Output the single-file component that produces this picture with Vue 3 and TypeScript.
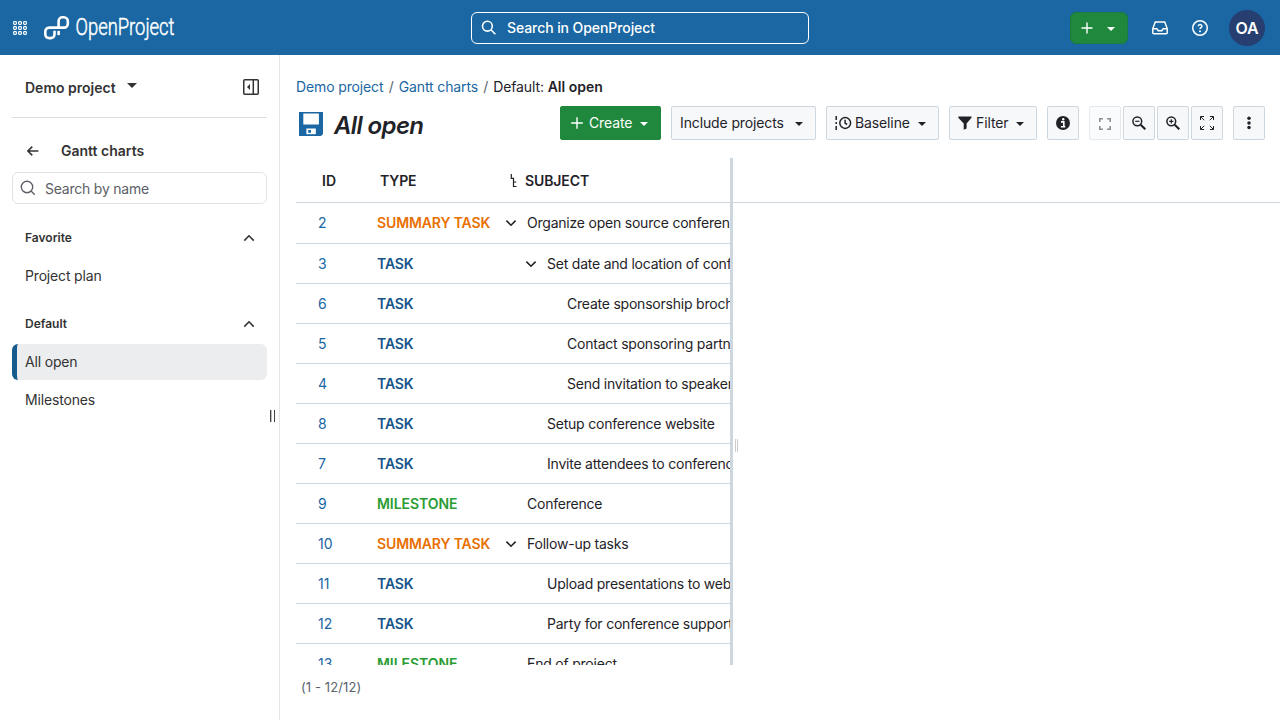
<script setup lang="ts">
interface WorkPackage {
  id: number
  type: 'Summary task' | 'Task' | 'Milestone'
  subject: string
  level: number
  open?: boolean
}

const rows: WorkPackage[] = [
  { id: 2, type: 'Summary task', subject: 'Organize open source conference', level: 0, open: true },
  { id: 3, type: 'Task', subject: 'Set date and location of conference', level: 1, open: true },
  { id: 6, type: 'Task', subject: 'Create sponsorship brochure and hand-outs', level: 2 },
  { id: 5, type: 'Task', subject: 'Contact sponsoring partners', level: 2 },
  { id: 4, type: 'Task', subject: 'Send invitation to speakers', level: 2 },
  { id: 8, type: 'Task', subject: 'Setup conference website', level: 1 },
  { id: 7, type: 'Task', subject: 'Invite attendees to conference', level: 1 },
  { id: 9, type: 'Milestone', subject: 'Conference', level: 0 },
  { id: 10, type: 'Summary task', subject: 'Follow-up tasks', level: 0, open: true },
  { id: 11, type: 'Task', subject: 'Upload presentations to website', level: 1 },
  { id: 12, type: 'Task', subject: 'Party for conference supporters :-)', level: 1 },
  { id: 13, type: 'Milestone', subject: 'End of project', level: 0 },
]

const typeClass = (t: WorkPackage['type']): string => 'type-' + t.split(' ')[0].toLowerCase()

const groups = [
  { name: 'Favorite', items: ['Project plan'] },
  { name: 'Default', items: ['All open', 'Milestones'] },
]
const active = 'All open'

const gridDots = [0, 1, 2].flatMap((r) => [0, 1, 2].map((c) => ({ x: 1 + c * 5, y: 1 + r * 5 })))
</script>

<template>
  <div class="app">
    <header class="topbar">
      <div class="brand">
        <svg class="grid-icon" width="14" height="14" viewBox="0 0 14 14">
          <rect v-for="(d, i) in gridDots" :key="i" :x="d.x - 0.4" :y="d.y - 0.4" width="2.8" height="2.8" rx=".8" />
        </svg>
        <svg class="logo" width="132" height="28" viewBox="0 0 132 28">
          <path d="M14.6 13.6V7a3.8 3.8 0 0 1 3.8-3.8h1.5a3.9 3.9 0 0 1 3.9 3.9v2.6a3.9 3.9 0 0 1-3.9 3.9H5.2a3.9 3.9 0 0 0-3.9 3.9v2.8a3.8 3.8 0 0 0 3.8 3.8h1.6a3.8 3.8 0 0 0 3.8-3.8v-3.6" class="mark" />
          <path d="M14.6 16.9v4.2" class="mark" />
          <text x="31.5" y="21" textLength="99" lengthAdjust="spacingAndGlyphs">OpenProject</text>
        </svg>
      </div>
      <div class="global-search">
        <svg width="16" height="16" viewBox="0 0 16 16"><circle cx="6.4" cy="6.2" r="4.9" /><path d="M9.9 9.7 14.4 14.2" /></svg>
        <span>Search in OpenProject</span>
      </div>
      <div class="top-actions">
        <div class="quick-add">
          <svg width="12" height="12" viewBox="0 0 12 12"><path d="M6 .5v11M.5 6h11" /></svg>
          <i class="caret" />
        </div>
        <svg class="inbox" width="16" height="16" viewBox="0 0 16 16">
          <path d="M3.3 2h9.4l2.5 6.6v4.2a1 1 0 0 1-1 1H1.8a1 1 0 0 1-1-1V8.6zM1 8.8h3.8l1.4 2h3.6l1.4-2H15" />
        </svg>
        <svg class="help" width="16" height="16" viewBox="0 0 16 16">
          <circle cx="8" cy="8" r="7.25" />
          <path d="M6.2 6.3c.1-2.3 3.7-2.3 3.7-.1 0 1.4-1.9 1.4-1.9 2.8" /><circle class="dot" cx="8" cy="11.3" r="1" />
        </svg>
        <div class="avatar">OA</div>
      </div>
    </header>

    <div class="body">
      <aside class="sidebar">
        <div class="project">
          <strong>Demo project</strong>
          <i class="caret big" />
          <svg class="collapse" width="16" height="16" viewBox="0 0 16 16">
            <rect x=".75" y=".75" width="14.5" height="14.5" rx="1" /><path d="M10.3 1v14" /><path class="solid" d="M7 5v6L4 8z" />
          </svg>
        </div>
        <div class="back">
          <svg width="12" height="12" viewBox="0 0 12 12"><path d="M5.3 1.6.9 6l4.4 4.4M1 6h10.4" /></svg>
          <strong>Gantt charts</strong>
        </div>
        <div class="side-search">
          <svg width="16" height="16" viewBox="0 0 16 16"><circle cx="7" cy="7" r="5.7" /><path d="M11.1 11.1l3.6 3.6" /></svg>
          <span>Search by name</span>
        </div>
        <section v-for="g in groups" :key="g.name" class="group">
          <div class="group-head">
            <span>{{ g.name }}</span>
            <svg width="12" height="12" viewBox="0 0 12 12"><path d="M1.3 8.6 6 3.8l4.7 4.8" /></svg>
          </div>
          <div v-for="it in g.items" :key="it" class="item" :class="{ active: it === active }">{{ it }}</div>
        </section>
        <div class="resizer" />
      </aside>

      <main class="main">
        <nav class="crumbs">
          <a>Demo project</a><span class="sep">/</span><a>Gantt charts</a><span class="sep">/</span><span>Default: <b>All open</b></span>
        </nav>
        <div class="toolbar">
          <svg class="save" width="24" height="24" viewBox="0 0 24 24">
            <path d="M0 0h24v22l-2 2H0z" /><rect class="w" x="4.3" y="1.5" width="15.6" height="11" /><rect class="w" x="7.4" y="16.5" width="9.4" height="5.7" /><rect x="9.2" y="18" width="2.8" height="2.8" />
          </svg>
          <h1>All open</h1>
          <div class="buttons">
            <div class="btn create">
              <svg width="12" height="12" viewBox="0 0 12 12"><path d="M6 .2v11.6M.2 6h11.6" /></svg>
              <span>Create</span><i class="caret" />
            </div>
            <div class="btn include"><span>Include projects</span><i class="caret" /></div>
            <div class="btn baseline">
              <svg width="17" height="16" viewBox="0 0 17 16">
                <path d="M1.2 1v4M1.2 7v2M1.2 11v4" /><circle cx="10.2" cy="8" r="5.4" /><path d="M10.1 4.8V8.2l2 1.3" />
              </svg>
              <span>Baseline</span><i class="caret" />
            </div>
            <div class="btn filter">
              <svg width="14" height="14" viewBox="0 0 14 14"><path d="M.3.5h13.2v1.2L8.6 7.4v5.2l-2.9 1.2V7.4L.3 1.7z" /></svg>
              <span>Filter</span><i class="caret" />
            </div>
            <div class="btn sq info">
              <svg width="14" height="14" viewBox="0 0 14 14"><circle cx="7" cy="7" r="7" /><path d="M5 5.9h2.8v4.7M4.9 10.8h4.4" /><circle class="w" cx="7.2" cy="3.3" r="1.2" /></svg>
            </div>
            <div class="btn sq dim">
              <svg width="12" height="12" viewBox="0 0 12 12"><path d="M.8 4V.8H4M8 .8h3.2V4M11.2 8v3.2H8M4 11.2H.8V8" /></svg>
            </div>
            <div class="btn sq tight zoom">
              <svg width="14" height="14" viewBox="0 0 14 14"><circle cx="5.3" cy="5.3" r="4.4" /><path class="h" d="m8.7 8.7 4.6 4.6" /><path class="s" d="M3.2 5.3h4.2" /></svg>
            </div>
            <div class="btn sq tight zoom">
              <svg width="14" height="14" viewBox="0 0 14 14"><circle cx="5.3" cy="5.3" r="4.4" /><path class="h" d="m8.7 8.7 4.6 4.6" /><path class="s" d="M3.2 5.3h4.2M5.3 3.2v4.2" /></svg>
            </div>
            <div class="btn sq tight full">
              <svg width="14" height="14" viewBox="0 0 14 14"><path d="M.5 4V.5H4M.8.8l3.4 3.4M10 .5h3.5V4M13.2.8 9.8 4.2M13.5 10v3.5H10M13.2 13.2 9.8 9.8M4 13.5H.5V10M.8 13.2l3.4-3.4" /></svg>
            </div>
            <div class="btn sq more">
              <svg width="4" height="14" viewBox="0 0 4 14"><circle cx="2" cy="2.2" r="1.75" /><circle cx="2" cy="6.9" r="1.75" /><circle cx="2" cy="11.6" r="1.75" /></svg>
            </div>
          </div>
        </div>

        <div class="split">
          <div class="table">
            <div class="row head">
              <div class="c-id">ID</div>
              <div class="c-type">TYPE</div>
              <div class="c-subject">
                <svg width="8" height="14" viewBox="0 0 8 14"><path d="M1.3 0v4.3h2.2v8.2h3M3.5 8h2.8" /></svg>
                SUBJECT
              </div>
            </div>
            <div v-for="r in rows" :key="r.id" class="row">
              <div class="c-id">{{ r.id }}</div>
              <div class="c-type" :class="typeClass(r.type)">{{ r.type }}</div>
              <div class="c-subject" :class="'level-' + r.level">
                <span class="toggle"><svg v-if="r.open" width="12" height="12" viewBox="0 0 12 12"><path d="M1.4 3.6 6 8.2l4.6-4.6" /></svg></span>
                <span class="subject">{{ r.subject }}</span>
              </div>
            </div>
          </div>
          <div class="timeline">
            <div class="timeline-head" />
            <div class="handle" />
          </div>
        </div>
        <footer class="pagination">(1 - 12/12)</footer>
      </main>
    </div>
  </div>
</template>

<style>
body {
  margin: 0;
  overflow: hidden;
}
</style>

<style scoped>
* { box-sizing: border-box; }
.app {
  width: 1280px;
  height: 720px;
  display: flex;
  flex-direction: column;
  overflow: hidden;
  font: 14px/20px Inter, "Liberation Sans", sans-serif;
  color: #1f2328;
  background: #fff;
}
svg { display: block; flex: none; fill: none; stroke: currentColor; }

.topbar {
  height: 55px;
  flex: none;
  display: grid;
  grid-template-columns: 471px 338px 1fr;
  align-items: center;
  background: #1a67a3;
  color: #fff;
}
.brand { display: flex; align-items: center; padding-left: 13px; }
.grid-icon { stroke-width: 1.1; margin-top: 1px; }
.logo { margin: 1px 0 0 17px; overflow: visible; }
.mark { stroke-width: 2.6; }
.logo text { font: 300 24.5px Roboto, sans-serif; fill: #fff; stroke: #fff; stroke-width: .5; }
.global-search {
  height: 32px;
  margin-top: 1px;
  display: flex;
  align-items: center;
  gap: 10px;
  padding-left: 9px;
  border: 1px solid #fff;
  border-radius: 6px;
  font-weight: 500;
  letter-spacing: -.08px;
}
.global-search svg { stroke-width: 1.6; }
.top-actions { display: flex; align-items: center; padding-right: 15px; justify-content: flex-end; margin-top: 1px; }
.quick-add {
  width: 58px;
  height: 32px;
  display: flex;
  align-items: center;
  gap: 14px;
  padding-left: 10px;
  margin-right: 24px;
  background: #1f883d;
  border: 1px solid #1b7b3d;
  border-radius: 6px;
}
.quick-add .caret { margin-top: 1px; }
.quick-add svg { stroke-width: 1.4; }
.inbox, .help { stroke-width: 1.5; }
.inbox { margin-right: 24px; }
.help { margin-right: 21px; }
.help .dot { fill: #fff; stroke: none; }
.avatar {
  width: 36px;
  height: 36px;
  border-radius: 50%;
  background: #263e70;
  font-size: 16px;
  font-weight: 600;
  line-height: 36px;
  text-align: center;
  letter-spacing: -.2px;
}
.caret { width: 0; height: 0; flex: none; border: 4px solid transparent; border-top-color: currentColor; border-bottom: 0; }
.caret.big { border-width: 5px 5px 0; margin: -3px 0 0 11px; }

.body { flex: 1; display: flex; min-height: 0; }
.sidebar {
  position: relative;
  width: 280px;
  flex: none;
  padding: 0 12px;
  border-right: 1px solid #e3e5e8;
  color: #333;
}
.sidebar strong { font-weight: 600; }
.project {
  height: 63px;
  display: flex;
  align-items: center;
  padding: 2px 8px 0 13px;
  border-bottom: 1px solid #d8dee4;
}
.project strong { margin-top: 2px; }
.collapse { margin-left: auto; stroke-width: 1.5; }
.collapse .solid { fill: currentColor; stroke: none; }
.back { height: 54px; display: flex; align-items: center; padding: 12px 0 0 15px; gap: 22px; }
.back svg { stroke-width: 1.5; }
.side-search {
  height: 32px;
  display: flex;
  align-items: center;
  gap: 9px;
  padding-left: 7px;
  padding-top: 1px;
  color: #5c6066;
  border: 1px solid #dfe3e8;
  border-radius: 6px;
  letter-spacing: -.22px;
}
.side-search svg { stroke-width: 1.4; margin-top: -2px; }
.group { padding-top: 16px; }
.group + .group { padding-top: 10px; }
.group-head {
  height: 36px;
  display: flex;
  align-items: center;
  justify-content: space-between;
  padding: 0 12px 0 13px;
  font-size: 12px;
  font-weight: 600;
}
.group-head svg { stroke-width: 1.6; }
.item { height: 36px; line-height: 36px; margin: 2px 0; padding-left: 13px; letter-spacing: -.17px; }
.item.active { background: #ebedef; border-left: 5px solid #175a8e; padding-left: 8px; border-radius: 6px; }
.resizer {
  position: absolute;
  right: 4px;
  top: 355px;
  width: 5px;
  height: 12px;
  border: solid #444;
  border-width: 0 1.5px;
  box-shadow: inset 1px 0 #bbb;
}

.main { flex: 1; min-width: 0; padding-left: 16px; display: flex; flex-direction: column; }
.crumbs { padding-top: 22px; white-space: nowrap; letter-spacing: -.13px; }
.crumbs a { color: #1a67a3; }
.crumbs b { font-weight: 600; letter-spacing: 0; }
.sep { padding: 0 5.2px; color: #59636e; }
.toolbar { height: 34px; margin-top: 9px; display: flex; align-items: center; padding-right: 15px; }
.save { margin-left: 3px; margin-top: 2px; stroke: none; fill: #1a67a3; }
.save .w { fill: #fff; }
h1 { margin: 5px 0 0 11px; font: italic 600 24px/30px Inter, "Liberation Sans", sans-serif; letter-spacing: -.62px; }
.buttons { margin-left: auto; display: flex; gap: 10px; letter-spacing: -.12px; }
.btn {
  height: 34px;
  display: flex;
  align-items: center;
  padding: 0 8px;
  background: #f6f8fa;
  border: 1px solid #ccd7df;
  border-radius: 2px;
  white-space: nowrap;
}
.btn .caret { margin-left: auto; margin-right: 4px; margin-top: 2px; }
.create { width: 101px; background: #1f883d; border-color: #1f883d; color: #fff; padding-left: 10px; gap: 6px; }
.create svg { stroke-width: 1.4; }
.include { width: 145px; }
.baseline { width: 113px; gap: 3px; }
.baseline svg { stroke-width: 1.5; }
.filter { width: 88px; gap: 4px; }
.filter svg { fill: currentColor; stroke: none; margin-top: -1px; }
.sq { width: 32px; padding: 0; justify-content: center; }
.tight { margin-left: -8px; }
.info svg { fill: #1f2328; stroke: none; }
.info svg path { stroke: #fff; stroke-width: 1.6; fill: none; }
.info .w { fill: #fff; }
.dim { opacity: .5; }
.dim svg { stroke-width: 1.6; margin-top: 1px; }
.zoom svg { stroke-width: 1.5; }
.zoom .h { stroke-width: 2.1; }
.zoom .s { stroke-width: 1.2; }
.full svg { stroke-width: 1; }
.more svg { fill: currentColor; stroke: none; }

.split { height: 507px; margin-top: 18px; display: flex; overflow: hidden; }
.table { width: 434px; flex: none; overflow: hidden; }
.row {
  height: 40px;
  display: grid;
  grid-template-columns: 81px 129px 500px;
  align-items: center;
  border-bottom: 1px solid #cdd7de;
}
.row .c-id { padding-left: 22px; color: #1a67a3; }
.row .c-type { text-transform: uppercase; font-weight: 600; letter-spacing: -.13px; }
.row:nth-child(2) { height: 41px; }
.row.head { height: 45px; font-weight: 600; padding-top: 2px; }
.head .c-id { padding-left: 26px; color: inherit; }
.head .c-type { padding-left: 3px; }
.head .c-subject { gap: 7px; padding-left: 4px; letter-spacing: -.1px; }
.head .c-subject svg { stroke-width: 1.2; margin-top: -1px; }
.c-subject { display: flex; align-items: center; white-space: nowrap; }
.subject { letter-spacing: -.22px; }
.level-1 { padding-left: 20px; }
.level-2 { padding-left: 40px; }
.toggle { width: 21px; flex: none; }
.toggle svg { margin-left: -1px; stroke-width: 1.6; }
.row .type-summary { color: #e87000; }
.row .type-task { color: #14548a; }
.row .type-milestone { color: #2a9c33; letter-spacing: -.05px; }
.timeline { position: relative; flex: 1; border-left: 3px solid #ccd7df; }
.timeline-head { height: 45px; border-bottom: 1px solid #cdd7de; }
.handle {
  position: absolute;
  left: 2px;
  top: 281px;
  width: 3px;
  height: 13px;
  border: solid #ccc;
  border-width: 0 1px;
}
.pagination { padding: 12px 0 0 5px; font-size: 13px; letter-spacing: .1px; color: #59636e; }
</style>
